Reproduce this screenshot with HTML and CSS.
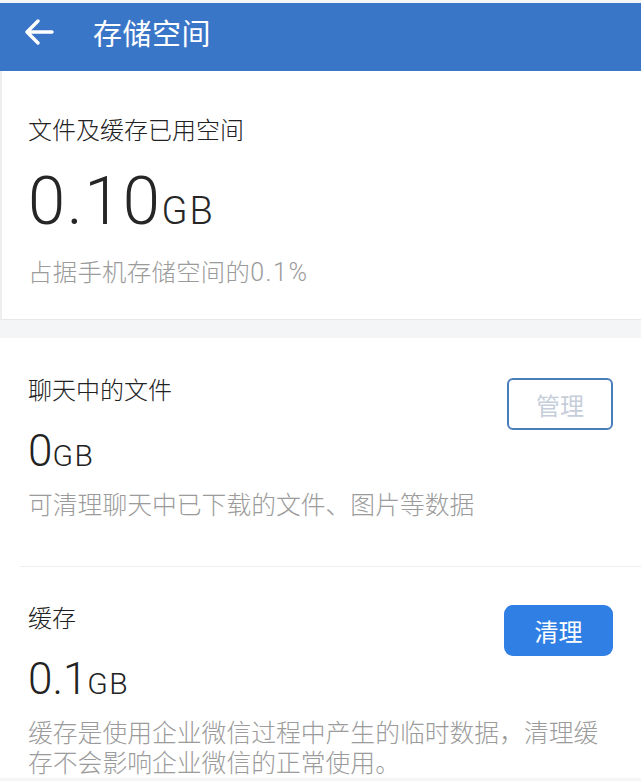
FILE: index.html
```html
<!DOCTYPE html>
<html lang="zh-CN">
<head>
    <meta charset="UTF-8">
    <meta name="viewport" content="width=device-width, initial-scale=1.0">
    <title>存储空间</title>
    <link rel="stylesheet" href="styles.css">
</head>
<body>
    <div class="topbar">
        <svg class="back" width="30" height="26" viewBox="0 0 30 26">
            <path d="M28 13H4M14 2L3 13l11 11" fill="none" stroke="white" stroke-width="3.4" stroke-linecap="round" stroke-linejoin="round"/>
        </svg>
        <p class="topbar-title">存储空间</p>
    </div>

    <div class="card">
        <p class="label">文件及缓存已用空间</p>
        <p class="big-size">0.10<span class="unit">GB</span></p>
        <p class="note">占据手机存储空间的<span class="pct">0.1%</span></p>
    </div>

    <div class="list">
        <div class="row">
            <p class="label">聊天中的文件</p>
            <button class="manage-button">管理</button>
            <p class="size">0<span class="unit">GB</span></p>
            <p class="note">可清理聊天中已下载的文件、图片等数据</p>
        </div>
        <div class="line"></div>
        <div class="row">
            <p class="label">缓存</p>
            <button class="clean-button">清理</button>
            <p class="size">0.1<span class="unit">GB</span></p>
            <p class="note">缓存是使用企业微信过程中产生的临时数据，清理缓存不会影响企业微信的正常使用。</p>
        </div>
    </div>
</body>
</html>
```

FILE: styles.css
```css
*{
    margin:0;
    padding:0;
    box-sizing: border-box;
}
body{
    background-color: #f4f5f7;
    color: #222;
    font-family: Roboto, "Noto Sans CJK SC", sans-serif;
    width: 641px;
    height: 781px;
    overflow: hidden;
}
.topbar{
    background-color: #3a76c8;
    height: 68px;
    margin-top: 3px;
    display: flex;
    align-items: center;
    padding-left: 24px;
    padding-bottom: 10px;
}
.back{
    margin-right: 39px;
}
.topbar-title{
    color: white;
    font-size: 29px;
    letter-spacing: 0.5px;
}
.card{
    background-color: white;
    border-left: 2px solid #eceef0;
    border-bottom: 1px solid #e6e8ea;
    height: 249px;
    padding: 45px 0 0 26px;
}
.label{
    font-size: 24px;
    line-height: 30px;
    color: #222;
    font-weight: 300;
}
.big-size{
    font-size: 67px;
    line-height: 67px;
    margin-top: 22px;
    font-weight: 300;
    color: #262626;
    letter-spacing: 1.5px;
}
.big-size .unit{
    font-size: 38px;
    letter-spacing: 2px;
}
.note{
    font-size: 24px;
    line-height: 30px;
    color: #9b9b9b;
    font-weight: 300;
}
.card .note{
    margin-top: 13px;
    font-size: 24.4px;
    letter-spacing: 0.3px;
}
.card .note .pct{
    font-size: 25px;
    letter-spacing: 1.5px;
}
.list{
    background-color: white;
    margin-top: 18px;
    height: 440px;
}
.row{
    display: grid;
    grid-template-columns: 1fr auto;
    padding: 38px 28px 0 28px;
}
.row .label{
    grid-column: 1;
    grid-row: 1;
}
.size{
    grid-column: 1;
    grid-row: 2;
    font-size: 44px;
    line-height: 44px;
    margin-top: 23px;
    font-weight: 300;
}
.size .unit{
    font-size: 30px;
    letter-spacing: 1.5px;
}
.row .note{
    grid-column: 1 / span 2;
    grid-row: 3;
    margin-top: 13px;
    font-size: 24.8px;
}
.manage-button{
    grid-column: 2;
    grid-row: 1 / span 2;
    align-self: start;
    background-color: white;
    border: 2px solid #4a7eba;
    border-radius: 6px;
    color: #c6ceda;
    font-family: "Noto Sans CJK SC", sans-serif;
    font-size: 24px;
    width: 106px;
    height: 52px;
    margin-top: 2px;
}
.clean-button{
    grid-column: 2;
    grid-row: 1 / span 2;
    align-self: start;
    background-color: #2f7fe4;
    border: none;
    border-radius: 9px;
    color: white;
    font-family: "Noto Sans CJK SC", sans-serif;
    font-size: 24px;
    width: 109px;
    height: 51px;
    margin-top: 1px;
}
.line{
    height: 1px;
    background-color: #eeeeee;
    margin: 45px 0 0 20px;
}
.line + .row{
    padding-top: 37px;
}
```
